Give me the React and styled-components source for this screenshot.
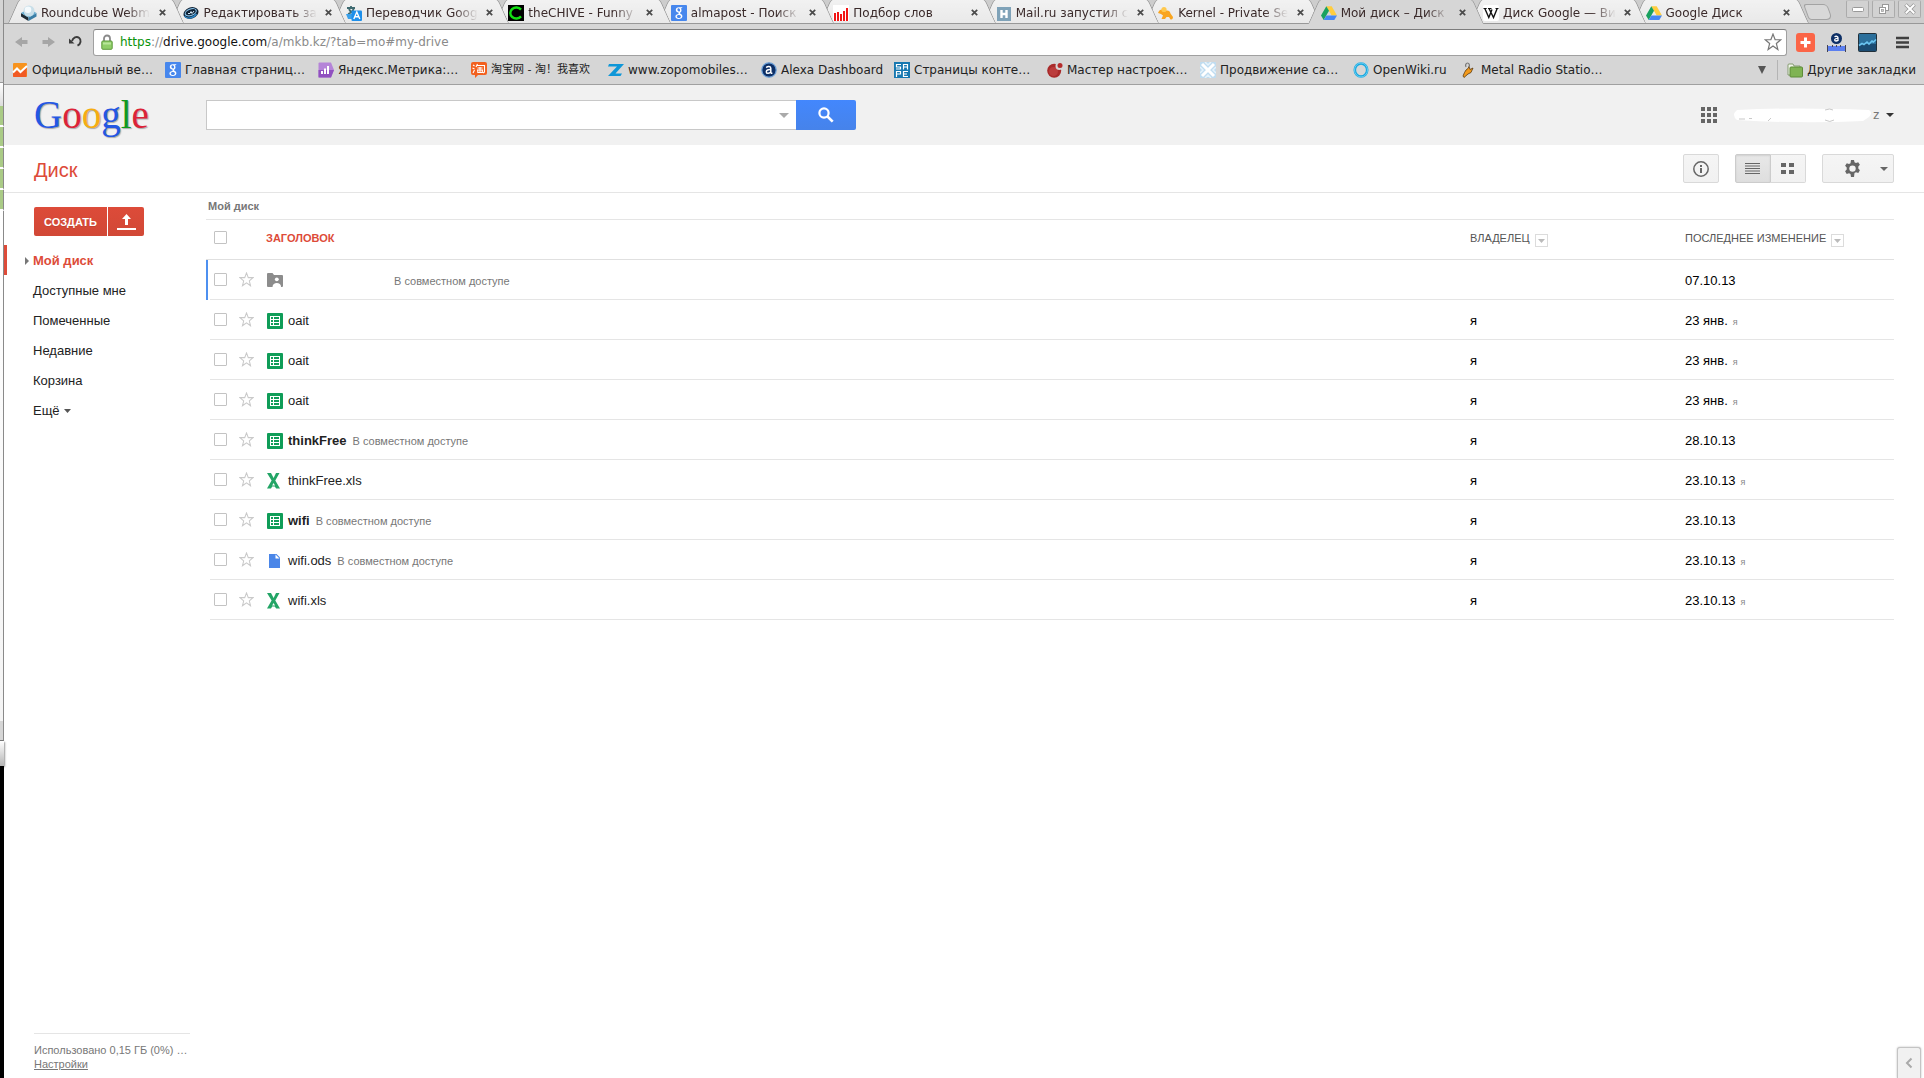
import React from "react";
import styled, { createGlobalStyle, css } from "styled-components";

const Global = createGlobalStyle`
  *, *::before, *::after { box-sizing: border-box; }
  body { margin: 0; background: #fff; font-family: "Liberation Sans", Arial, sans-serif; font-size: 13px; color: #222; }
  button, input { font: inherit; margin: 0; padding: 0; }
  button { border: 0; background: none; color: inherit; }
  a { color: inherit; text-decoration: none; }
  svg { display: block; flex: none; }
`;

const uiFont = css`
  font-family: "DejaVu Sans", "Noto Sans CJK SC", sans-serif;
  font-size: 12px;
`;

/* ---------- desktop and window ---------- */

const Desktop = styled.div`
  display: flex;
  min-height: 100vh;
`;

const Behind = styled.div`
  flex: 0 0 4px;
  display: flex;
  flex-direction: column;
  background: #000;
`;

const Slice = styled.div`
  flex: none;
  height: ${(p) => p.$h}px;
  background: ${(p) => p.$bg};
  border-right: ${(p) => (p.$edge === false ? "0" : "1px solid #8a8a8a")};
  border-bottom: ${(p) => p.$line || "0"};
  box-shadow: ${(p) => (p.$shadow ? "1px 1px 2px rgba(0,0,0,.4)" : "none")};
  z-index: ${(p) => (p.$shadow ? 1 : 0)};
`;

const BrowserWindow = styled.div`
  flex: 1;
  min-width: 0;
  display: flex;
  flex-direction: column;
`;

/* ---------- tab strip ---------- */

const TabStrip = styled.div`
  ${uiFont}
  display: flex;
  height: 24px;
  padding-left: 4px;
  background: #cdcdcd;
  border-bottom: 1px solid #989898;
`;

const Tabs = styled.div`
  flex: 1;
  display: grid;
  grid-template-columns: repeat(11, minmax(0, 1fr));
`;

const Tab = styled.div`
  position: relative;
  z-index: ${(p) => (p.$active ? 30 : 20 - p.$index)};
  height: 24px;
  padding: 1px 0 0 13px;
  display: flex;
  align-items: center;
  gap: 4px;
  color: #3a2a2a;

  &::before,
  &::after {
    content: "";
    position: absolute;
    z-index: -1;
    top: -1px;
    bottom: ${(p) => (p.$active ? 0 : 1)}px;
    width: 60%;
    background: ${(p) => (p.$active ? "#d6d6d6" : "linear-gradient(#f2f2f2, #e9e9e9)")};
  }
  &::before {
    left: 0;
    border-left: 1px solid #989898;
    border-top-left-radius: 5px;
    transform: skewX(-24deg);
    transform-origin: bottom left;
  }
  &::after {
    right: -14px;
    border-right: 1px solid #989898;
    border-top-right-radius: 5px;
    transform: skewX(24deg);
    transform-origin: bottom right;
  }
`;

const TabTitle = styled.a`
  flex: 1;
  white-space: nowrap;
  line-height: 18px;
  mask-image: linear-gradient(to right, #000 calc(100% - 24px), transparent);
`;

const TabClose = styled.button`
  flex: 0 0 16px;
  height: 16px;
  display: grid;
  place-items: center;
`;

const NewTab = styled.button`
  flex: none;
  width: 24px;
  height: 16px;
  margin: 4px 16px 0 11px;
  border: 1px solid #a3a3a3;
  border-radius: 3px 4px 6px 3px;
  background: #d8d8d8;
  transform: skewX(20deg);
`;

const WindowButtons = styled.div`
  display: flex;
  gap: 3px;
  padding: 0 3px 0 0;
`;

const WindowButton = styled.button`
  width: 23px;
  height: 18px;
  border: 1px solid #ababab;
  border-top-color: #c2c2c2;
  border-radius: 2px;
  background: #d2d2d2;
  display: grid;
  place-items: center;
`;

/* ---------- toolbar ---------- */

const Toolbar = styled.div`
  ${uiFont}
  display: flex;
  align-items: center;
  height: 34px;
  padding: 2px 15px 0 11px;
  background: #d6d6d6;
`;

const NavButton = styled.button`
  width: 27px;
  height: 24px;
  display: flex;
  align-items: center;
`;

const Omnibox = styled.div`
  flex: 1;
  height: 27px;
  margin: 0 9px 0 -3px;
  padding: 0 4px 0 7px;
  display: flex;
  align-items: center;
  gap: 7px;
  background: #fff;
  border: 1px solid #a0a0a0;
  border-top-color: #7d7d7d;
  border-radius: 3px;
`;

const Url = styled.span`
  flex: 1;
  line-height: 18px;
  color: #8a8a8a;
`;
const Scheme = styled.span`
  color: #0a930a;
`;
const Host = styled.span`
  color: #111;
`;

const Extensions = styled.div`
  display: flex;
  align-items: center;
  gap: 12px;
`;

const MenuButton = styled.button`
  margin-left: 19px;
`;

const BookmarkBar = styled.nav`
  ${uiFont}
  display: flex;
  align-items: center;
  height: 27px;
  padding: 0 8px 3px 8px;
  background: #d6d6d6;
  border-bottom: 1px solid #a0a0a0;
`;

const Bookmark = styled.a`
  flex: none;
  display: flex;
  align-items: center;
  gap: 4px;
  width: ${(p) => (p.$w ? p.$w + "px" : "auto")};
  font-size: ${(p) => (p.$small ? 11 : 12)}px;
  line-height: 18px;
  white-space: nowrap;
  color: #222;
`;

const Overflow = styled.button`
  margin: 0 9px 0 auto;
  padding-right: 11px;
  height: 20px;
  border-right: 1px solid #b4b4b4;
`;

/* ---------- Google bar ---------- */

const GoogleBar = styled.header`
  display: flex;
  align-items: center;
  height: 60px;
  padding: 0 30px;
  background: #f1f1f1;
`;

const Logo = styled.a`
  width: 172px;
  font: 39px/50px "Liberation Serif", serif;
  text-shadow: 1px 1px 1px rgba(0, 0, 0, 0.3);
`;
const Letter = styled.span`
  color: ${(p) => p.$c};
`;

const SearchForm = styled.form`
  display: flex;
  flex: 0 1 650px;
  height: 30px;
`;

const SearchBox = styled.div`
  flex: 1;
  display: flex;
  align-items: center;
  padding-right: 7px;
  background: #fff;
  border: 1px solid #c8c8c8;
  border-right: 0;
`;

const SearchInput = styled.input`
  flex: 1;
  height: 100%;
  border: 0;
  outline: 0;
  padding: 0 8px;
  background: transparent;
`;

const SearchButton = styled.button`
  width: 60px;
  border-radius: 0 2px 2px 0;
  background: linear-gradient(#4387fd, #4683ea);
  display: grid;
  place-items: center;
`;

const Account = styled.button`
  display: flex;
  align-items: center;
  margin-left: 16px;
`;

const AccountName = styled.span`
  display: flex;
  align-items: center;
  gap: 1px;
  width: 147px;
  margin-right: 6px;
  line-height: 18px;
  color: #777;
`;

const AppsButton = styled.button`
  margin-left: auto;
`;

/* ---------- Drive title row ---------- */

const TitleRow = styled.div`
  display: flex;
  align-items: center;
  height: 48px;
  padding: 0 30px;
  border-bottom: 1px solid #e5e5e5;
`;

const Title = styled.h1`
  margin: 0 auto 0 0;
  padding-top: 2px;
  font-size: 20px;
  line-height: 24px;
  font-weight: 400;
  color: #dd4b39;
`;

const ToolButton = styled.button`
  width: ${(p) => p.$w || 36}px;
  height: 29px;
  border: 1px solid #d9d9d9;
  border-radius: ${(p) => p.$radius || "2px"};
  border-left-width: ${(p) => (p.$joined ? 0 : 1)}px;
  background: linear-gradient(#f5f5f5, #f1f1f1);
  display: flex;
  align-items: center;
  justify-content: center;
  ${(p) =>
    p.$pressed &&
    css`
      border-color: #ccc;
      background: linear-gradient(#e8e8e8, #dedede);
      box-shadow: inset 0 1px 2px rgba(0, 0, 0, 0.1);
    `}
`;

const ToolGroup = styled.div`
  display: flex;
  margin: 0 16px;
`;

const GearWrap = styled.span`
  margin: 0 19px 0 16px;
`;

/* ---------- body ---------- */

const Body = styled.div`
  flex: 1;
  display: flex;
`;

const Sidebar = styled.aside`
  flex: 0 0 202px;
  display: flex;
  flex-direction: column;
  padding-top: 14px;
`;

const CreateRow = styled.div`
  display: flex;
  gap: 1px;
  padding: 0 30px;
  margin-bottom: 9px;
`;

const RedButton = styled.button`
  width: ${(p) => p.$w}px;
  height: 29px;
  border-radius: ${(p) => p.$radius};
  background: linear-gradient(#dd4b39, #d14836);
  color: #fff;
  font-size: 11px;
  font-weight: 700;
  text-shadow: 0 1px rgba(0, 0, 0, 0.1);
  display: grid;
  place-items: center;
`;

const NavList = styled.ul`
  list-style: none;
  margin: 0;
  padding: 0;
`;

const NavItem = styled.li`
  height: 30px;
  display: flex;
  align-items: center;
  border-left: 3px solid ${(p) => (p.$active ? "#dd4b39" : "transparent")};
  padding: 2px 0 0 18px;
`;

const NavArrow = styled.span`
  width: 8px;
`;

const NavLink = styled.a`
  display: flex;
  align-items: center;
  gap: 4px;
  line-height: 16px;
  font-weight: ${(p) => (p.$active ? 700 : 400)};
  color: ${(p) => (p.$active ? "#dd4b39" : "#222")};
`;

const Storage = styled.footer`
  margin: auto 16px 7px 30px;
  padding-top: 9px;
  border-top: 1px solid #e5e5e5;
  font-size: 11px;
  line-height: 14px;
  color: #777;
  white-space: nowrap;
`;

const SettingsLink = styled.a`
  text-decoration: underline;
`;

const Content = styled.main`
  flex: 1;
  min-width: 0;
  padding-right: 30px;
`;

const Crumb = styled.h2`
  margin: 0;
  padding: 6px 2px 6px;
  font-size: 11px;
  line-height: 14px;
  color: #777;
  border-bottom: 1px solid #e5e5e5;
`;

const FileTable = styled.table`
  width: 100%;
  table-layout: fixed;
  border-collapse: separate;
  border-spacing: 0;
`;

const HeadCell = styled.th`
  width: ${(p) => (p.$w ? p.$w + "px" : "auto")};
  height: 40px;
  padding: 0 0 4px;
  border-bottom: 1px solid #e0e0e0;
  text-align: left;
  font-size: 11px;
  font-weight: ${(p) => (p.$sorted ? 700 : 400)};
  color: ${(p) => (p.$sorted ? "#dd4b39" : "#555")};
`;

const HeadLabel = styled.span`
  display: flex;
  align-items: center;
  gap: 5px;
`;

const SortButton = styled.button`
  width: 13px;
  height: 13px;
  margin-top: 6px;
  border: 1px solid #dcdcdc;
  display: grid;
  place-items: center;
`;

const Cell = styled.td`
  height: 40px;
  padding: ${(p) => (p.$text ? "2px 0 0" : "0")};
  border-bottom: 1px solid #e5e5e5;
  color: ${(p) => (p.$dark ? "#000" : "#222")};
  white-space: nowrap;
`;

const MarkCell = styled.td`
  padding: 0;
  box-shadow: ${(p) => (p.$on ? "inset 2px 0 #4d90f0" : "none")};
`;

const Check = styled.input`
  appearance: none;
  display: block;
  width: 13px;
  height: 13px;
  margin-left: 4px;
  border: 1px solid #c3c3c3;
  border-radius: 1px;
  background: #fff;
`;

const StarButton = styled.button`
  display: block;
  padding-left: 1px;
`;

const NameLine = styled.div`
  display: flex;
  align-items: center;
  padding-left: 1px;
  line-height: 16px;
`;

const IconBox = styled.span`
  width: 21px;
`;

const FileName = styled.a`
  min-width: ${(p) => (p.$blank ? 100 : 0)}px;
  font-weight: ${(p) => (p.$bold ? 700 : 400)};
`;

const Shared = styled.span`
  margin-left: 6px;
  font-size: 11px;
  color: #777;
`;

const By = styled.span`
  margin-left: 5px;
  font-size: 9px;
  color: #888;
`;

const Expander = styled.button`
  position: fixed;
  right: 3px;
  bottom: 0;
  width: 24px;
  height: 31px;
  border: 1px solid #c4c4c4;
  border-bottom: 0;
  border-radius: 3px 3px 0 0;
  background: #f1f1f1;
  box-shadow: 0 0 2px rgba(0, 0, 0, 0.3);
  display: grid;
  place-items: center;
`;

/* ---------- drawings ---------- */

const Svg = ({ w = 16, h = w, vb, children }) => (
  <svg width={w} height={h} viewBox={vb || `0 0 ${w} ${h}`} aria-hidden="true">
    {children}
  </svg>
);

const Down = ({ w = 8, h = 4, c = "#555" }) => (
  <Svg w={w} h={h}>
    <path d={`M0 0H${w}L${w / 2} ${h}Z`} fill={c} />
  </Svg>
);

const DriveIcon = () => (
  <Svg>
    <path d="M5.3 1.2h5.4L16 10.4h-5.3Z" fill="#ffcd3e" />
    <path d="M5.3 1.2 8 5.8 2.7 15 0 10.4Z" fill="#19a15f" />
    <path d="M5.4 10.4H16L13.3 15H2.7Z" fill="#4587f4" />
  </Svg>
);

const GIcon = () => (
  <Svg>
    <rect width="16" height="16" rx="1" fill="#4787ed" />
    <path d="M11.5 2.2H8C5.700 2.200 4.800 3.600 4.800 4.900c0 1.500 1.200 2.600 2.800 2.500-.4.900 0 1.300.4 1.700-2.200.1-3.600.9-3.600 2.500 0 1.400 1.300 2.300 3.300 2.300 2.400 0 3.700-1.200 3.700-2.700 0-2.200-2.900-2.300-2.300-3.400.9-.6 1.400-1.500 1.400-2.500 0-.9-.4-1.500-.9-2h1.200Z M7.600 3.200c1 0 1.500 1.100 1.500 2s-.4 1.400-1.200 1.400c-1 0-1.500-1.100-1.500-2 0-.8.400-1.400 1.200-1.400Z M8.200 9.900c1.200.2 1.700.8 1.700 1.500 0 .9-.7 1.500-2 1.500s-2.100-.6-2.100-1.500c0-1 .9-1.500 2.400-1.500Z" fill="#fff" fillRule="evenodd" />
  </Svg>
);

const AlexaIcon = ({ w = 16 }) => (
  <Svg w={w} vb="0 0 16 16">
    <circle cx="8" cy="8" r="7.200" fill="#0d2f66" stroke="#6b9fd8" strokeWidth="1.200" />
    <path d="M5.200 5.600c1.500-1.500 4.600-1.400 4.600.6v5M9.800 7.600C7 7.400 5.300 8.200 5.300 9.900c0 1.900 3.300 2 4.500 0M9.800 11.200h1.600" fill="none" stroke="#fff" strokeWidth="1.500" />
  </Svg>
);

const favicons = {
  roundcube: (
    <Svg>
      <path d="M0 8 7.500 12.500V16L0 11.500Z" fill="#1d2a33" />
      <path d="M15.500 8 7.500 12.500V16l8-4.500Z" fill="#3b7ea6" />
      <path d="M0 8 8 4l7.500 4-8 4.500Z" fill="#5fa8cf" />
      <circle cx="8" cy="6" r="5.500" fill="#c9dfe9" />
      <circle cx="7" cy="4.800" r="3.300" fill="#f4fafd" />
    </Svg>
  ),
  edit: (
    <Svg>
      <ellipse cx="8" cy="8" rx="7.700" ry="5.600" transform="rotate(-20 8 8)" fill="#0f2236" />
      <ellipse cx="8" cy="7.200" rx="5.800" ry="3.200" transform="rotate(-20 8 8)" fill="none" stroke="#8bc4ea" strokeWidth="1.100" />
      <path d="M5 8.500h2l1-2 1 2 2-2.500" stroke="#cfe6f5" fill="none" />
      <path d="M1.500 11c2 3 8 3 12-2" fill="none" stroke="#2a86c8" strokeWidth="1.300" />
    </Svg>
  ),
  translate: (
    <Svg>
      <path d="M1 3h8M5 1v2M8 3c-1 3-3 5-6 6M3 4c1 2 3 4 5 4" stroke="#3f6a70" strokeWidth="1.800" fill="none" />
      <path d="M0 9h6v5H2Z" fill="#3aa0ea" />
      <rect x="5.500" y="5.500" width="10.500" height="10.500" rx="1" fill="#1e8fea" />
      <path d="m7.800 14 3-7 3 7M9 11.800h3.600" stroke="#fff" strokeWidth="1.400" fill="none" />
    </Svg>
  ),
  chive: (
    <Svg>
      <rect width="16" height="16" fill="#000" />
      <path d="M13 4.600A6 5.500 0 1 0 13 11.400" fill="none" stroke="#12e012" strokeWidth="2.400" />
    </Svg>
  ),
  google: <GIcon />,
  podbor: (
    <Svg>
      <rect width="16" height="16" fill="#fff" />
      <path d="M2 8v8M5 7v9M8 9v7M11 6v10M14 3v13" stroke="#f21616" strokeWidth="2" />
    </Svg>
  ),
  mail: (
    <Svg>
      <rect x="1" y="2" width="14" height="14" fill="#7fa2b8" />
      <path d="M5.500 5v8M10.500 5v8M5 9h6" stroke="#fff" strokeWidth="2.400" />
    </Svg>
  ),
  kernel: (
    <Svg>
      <path d="M0 8c1-3 3-4 5-3.500L7 6c3-1 5 0 5.500 2.500L15 12c0 2-1 2.500-2.500 2.500L11 12H8.500L7 14H3.500L5 10.500 3 9Z" fill="#f9a51f" />
      <circle cx="6" cy="4.500" r="2.600" fill="#ffc94d" />
    </Svg>
  ),
  drive: <DriveIcon />,
  wiki: (
    <Svg>
      <rect width="16" height="16" rx="2" fill="#fff" />
      <path d="m1.800 3.500 4 9L9 4.500M6 3.500l4.500 9 3.700-9" fill="none" stroke="#111" strokeWidth="1.400" />
      <path d="M.5 3.500h3.200M5 3.500h3.500M12.500 3.500h3" stroke="#111" />
    </Svg>
  ),
  analytics: (
    <Svg>
      <rect x="1" y="1" width="14" height="14" rx="1" fill="#f7931e" />
      <path d="M1 11.500 5 8l3 3 6.500-6.500V14q0 1-1 1H2q-1 0-1-1Z" fill="#f15a24" />
      <path d="m1 10.500 4-4L8.500 10 15 4" fill="none" stroke="#fff" strokeWidth="2" />
    </Svg>
  ),
  metrika: (
    <Svg>
      <path d="M1.500.5H13L16 8l-3 7.500H1.500Q.5 15.500.5 14.500v-13Q.5.500 1.500.500Z" fill="#b584d8" />
      <path d="M.5 8H16l-3 7.500H.5Z" fill="#9050c0" />
      <path d="M4 9v3M7 6.500V12M10 4v8" stroke="#fff" strokeWidth="2" />
    </Svg>
  ),
  taobao: (
    <Svg>
      <path d="M2 0h12q2 0 2 2v9q0 2-2 2H7l-3 3v-3H2q-2 0-2-2V2q0-2 2-2Z" fill="#f2601e" />
      <path d="m2 3 1.500 1M1.500 6l2 1M3.500 8 2 11M6.500 2 5 5M6 3.500h7.500V10L12 11M6.500 6h5M6 8h6M9 5v5M6.800 8.500v2h4.500v-2" fill="none" stroke="#fff" strokeWidth="1.100" />
    </Svg>
  ),
  zopo: (
    <Svg>
      <path d="M1 2h15l-8.500 9.500H14L12.500 14H0l9-9.500H0Z" fill="#0f97d8" />
    </Svg>
  ),
  alexa: <AlexaIcon />,
  sape: (
    <Svg>
      <rect width="16" height="16" fill="#1778b0" />
      <path d="M7 2.500H2.500V5H6.500V7H2M9.500 7.500v-5h4v5M9.500 5h4M2.500 15V9.500h4V12h-4M14 9.500H9.500v5H14M9.500 12H13" fill="none" stroke="#fff" strokeWidth="1.200" />
    </Svg>
  ),
  master: (
    <Svg>
      <circle cx="7.200" cy="8.700" r="7" fill="#a92a2a" />
      <circle cx="6.500" cy="9.500" r="4.500" fill="#bb3c3c" />
      <circle cx="12.500" cy="4" r="4" fill="#d6d6d6" />
      <circle cx="13" cy="3.500" r="2.500" fill="#b52c2c" />
    </Svg>
  ),
  promo: (
    <Svg>
      <rect width="16" height="16" rx="1" fill="#bfdcf0" />
      <path d="M2 2l12 12M14 2 2 14" stroke="#fff" strokeWidth="3" fill="none" />
      <path d="M5 0l3 3 3-3M5 16l3-3 3 3M0 5l3 3-3 3M16 5l-3 3 3 3" stroke="#e6f2fa" strokeWidth="1.500" fill="none" />
    </Svg>
  ),
  openwiki: (
    <Svg>
      <ellipse cx="8" cy="8" rx="6.200" ry="6.500" fill="none" stroke="#18a8e0" strokeWidth="2.600" />
      <ellipse cx="8" cy="8" rx="6.500" ry="7" fill="none" stroke="#7fd6f4" strokeWidth=".8" />
    </Svg>
  ),
  radio: (
    <Svg>
      <path d="M2 14 3.500 10.500 5 8l2-1.500 1-2 1 3L12 6l-2 4.500-3 1.500-4 3.500Z" fill="#f39a1b" stroke="#5b3a10" strokeWidth=".8" />
      <path d="M5 5c-1-2 0-4 1.500-4S9 3 8 5" fill="none" stroke="#777" strokeWidth="1.200" />
    </Svg>
  ),
};

const StarIcon = ({ w = 15, c = "#c9c9c9" }) => (
  <Svg w={w} vb="0 0 16 16">
    <path d="m8 1 1.900 5h5l-3.900 3.400 1.300 5.200L8 11.600l-4.300 3 1.300-5.200L1.100 6h5Z" fill="#fff" stroke={c} strokeWidth="1.100" />
  </Svg>
);

const fileIcons = {
  folder: (
    <Svg>
      <path d="M0 2q0-1 1-1h4.500L7 3h8q1 0 1 1v10q0 1-1 1H1q-1 0-1-1Z" fill="#8c8c8c" transform="translate(0 -1)" />
      <circle cx="9.800" cy="6.300" r="1.900" fill="#fff" />
      <path d="M5.500 14c0-2.500 2-4 4.300-4s4.300 1.500 4.300 4Z" fill="#fff" />
    </Svg>
  ),
  sheet: (
    <Svg>
      <rect width="16" height="16" rx="1" fill="#0f9d58" />
      <rect x="3.500" y="3.500" width="9" height="9" fill="none" stroke="#fff" />
      <path d="M3 6.500h10M3 9.500h10M6.500 3v10" stroke="#fff" />
    </Svg>
  ),
  excel: (
    <Svg>
      <path d="M0 0h4l2.600 5L9 0h3.500L8.300 7.500 13 15.500H9.200l-1.500-2H5.200L4 15.500H0L4.600 7.500Z" fill="#23a566" />
      <path d="m6.500 10 1.600 2.500H5.200Z" fill="#fff" />
    </Svg>
  ),
  file: (
    <Svg>
      <path d="M2 1h7.500l3.500 3.500V15H2Z" fill="#4a86e8" />
      <path d="M8.500 1.500v4h4Z" fill="#fff" />
    </Svg>
  ),
};

const CloseX = () => (
  <Svg w={7}>
    <path d="m.8.8 5.400 5.400M6.200.8.8 6.200" stroke="#4a4a4a" strokeWidth="1.700" />
  </Svg>
);

/* ---------- data ---------- */

const tabs = [
  ["roundcube", "Roundcube Webm"],
  ["edit", "Редактировать за"],
  ["translate", "Переводчик Goog"],
  ["chive", "theCHIVE - Funny"],
  ["google", "almapost - Поиск"],
  ["podbor", "Подбор слов"],
  ["mail", "Mail.ru запустил с"],
  ["kernel", "Kernel - Private Se"],
  ["drive", "Мой диск – Диск"],
  ["wiki", "Диск Google — Ви"],
  ["drive", "Google Диск"],
];

const bookmarks = [
  ["analytics", "Официальный ве…", 153],
  ["google", "Главная страниц…", 153],
  ["metrika", "Яндекс.Метрика:…", 153],
  ["taobao", "淘宝网 - 淘！我喜欢", 137],
  ["zopo", "www.zopomobiles…", 153],
  ["alexa", "Alexa Dashboard", 133],
  ["sape", "Страницы конте…", 153],
  ["master", "Мастер настроек…", 153],
  ["promo", "Продвижение са…", 153],
  ["openwiki", "OpenWiki.ru", 108],
  ["radio", "Metal Radio Statio…", 153],
];

const nav = ["Мой диск", "Доступные мне", "Помеченные", "Недавние", "Корзина", "Ещё"];

const files = [
  { icon: "folder", name: "", shared: true, owner: "", date: "07.10.13", marked: true },
  { icon: "sheet", name: "oait", owner: "я", date: "23 янв.", by: true },
  { icon: "sheet", name: "oait", owner: "я", date: "23 янв.", by: true },
  { icon: "sheet", name: "oait", owner: "я", date: "23 янв.", by: true },
  { icon: "sheet", name: "thinkFree", bold: true, shared: true, owner: "я", date: "28.10.13" },
  { icon: "excel", name: "thinkFree.xls", owner: "я", date: "23.10.13", by: true },
  { icon: "sheet", name: "wifi", bold: true, shared: true, owner: "я", date: "23.10.13" },
  { icon: "file", name: "wifi.ods", shared: true, owner: "я", date: "23.10.13", by: true },
  { icon: "excel", name: "wifi.xls", owner: "я", date: "23.10.13", by: true },
];

const logo = [
  ["G", "#2457e3"],
  ["o", "#dc2338"],
  ["o", "#f6ad12"],
  ["g", "#2457e3"],
  ["l", "#13991d"],
  ["e", "#dc2338"],
];

/* ---------- sections ---------- */

const BackgroundWindows = () => (
  <Behind>
    <Slice $h={83} $bg="#d4d4d4" $line="1px solid #999" />
    <Slice $h={23} $bg="linear-gradient(#fff, #dcdcdc)" />
    {[0, 1, 2, 3, 4].map((n) => (
      <Slice key={n} $h={21} $bg="#aacb86" $line="2px solid #fff" />
    ))}
    <Slice $h={510} $bg="linear-gradient(#fff, #f4f4f4)" />
    <Slice $h={20} $bg="#d6d6d6" $line="1px solid #777" />
    <Slice $h={25} $bg="linear-gradient(#fff, #b5b5b5)" $edge={false} $shadow />
  </Behind>
);

const BrowserChrome = () => (
  <>
    <TabStrip>
      <Tabs>
        {tabs.map(([icon, title], i) => (
          <Tab key={i} $index={i} $active={i === 8}>
            {favicons[icon]}
            <TabTitle href="#tab">{title}</TabTitle>
            <TabClose aria-label="Закрыть вкладку">
              <CloseX />
            </TabClose>
          </Tab>
        ))}
      </Tabs>
      <NewTab aria-label="Новая вкладка" />
      <WindowButtons>
        <WindowButton aria-label="Свернуть">
          <Svg w={12} h={5}>
            <rect x=".5" y=".5" width="11" height="4" rx="1" fill="#fff" stroke="#999" />
          </Svg>
        </WindowButton>
        <WindowButton aria-label="Развернуть">
          <Svg w={12}>
            <rect x="4.500" y="1.500" width="6" height="6" fill="#fff" stroke="#999" />
            <rect x="1.500" y="4.500" width="6" height="6" fill="#fff" stroke="#999" />
            <rect x="3.500" y="6.500" width="2" height="2" fill="#ccc" stroke="#999" strokeWidth=".7" />
          </Svg>
        </WindowButton>
        <WindowButton aria-label="Закрыть">
          <Svg w={12}>
            <path d="m1.500 1.500 9 9M10.500 1.500l-9 9" stroke="#999" strokeWidth="3.600" />
            <path d="m1.800 1.800 8.400 8.400M10.200 1.800l-8.400 8.400" stroke="#fff" strokeWidth="2" />
          </Svg>
        </WindowButton>
      </WindowButtons>
    </TabStrip>

    <Toolbar>
      <NavButton aria-label="Назад">
        <Svg w={13} h={12}>
          <path d="M0 6 7 1v3h5.500v4H7v3Z" fill="#a6a6a6" />
        </Svg>
      </NavButton>
      <NavButton aria-label="Вперёд">
        <Svg w={13} h={12}>
          <path d="M13 6 6 1v3H.5v4H6v3Z" fill="#a6a6a6" />
        </Svg>
      </NavButton>
      <NavButton aria-label="Обновить">
        <Svg w={14}>
          <path d="M3 6C4 2.500 7.500 1 10 2.700c2.600 2 2 6.300-1.500 8" fill="none" stroke="#3c3c3c" strokeWidth="1.900" />
          <path d="M0 3.500v5h5.500Z" fill="#3c3c3c" />
        </Svg>
      </NavButton>
      <Omnibox>
        <Svg w={12} h={16}>
          <path d="M3 8V4.500a3 3 0 0 1 6 0V8" fill="none" stroke="#8a8a8a" strokeWidth="1.800" />
          <rect x=".8" y="7" width="10.400" height="8.300" rx="1" fill="#8fce68" stroke="#5e9a3c" />
          <path d="M2 9.500h8" stroke="#b8e69a" strokeWidth="2" />
        </Svg>
        <Url>
          <Scheme>https</Scheme>://<Host>drive.google.com</Host>/a/mkb.kz/?tab=mo#my-drive
        </Url>
        <StarIcon w={18} c="#777" />
      </Omnibox>
      <Extensions>
        <Svg w={19}>
          <rect width="19" height="19" rx="3" fill="#fb6547" />
          <path d="M9.500 4.500v10M4.500 9.500h10" stroke="#fff" strokeWidth="3" />
        </Svg>
        <Svg w={19}>
          <circle cx="9.500" cy="5.500" r="5.500" fill="#0d2f66" />
          <path d="M7.500 3.800c1.500-1 3.500-.6 3.500 1V8M11 5.500C9 5.300 7.700 5.900 7.700 7c0 1.300 2.300 1.300 3.300 0" fill="none" stroke="#fff" strokeWidth="1.300" />
          <rect x="0" y="13" width="19" height="5" fill="#5b7ff0" />
          <path d="M.5 12v7M5.500 12v2M9.500 12v2M13.500 12v2M18.500 12v7" stroke="#445" strokeWidth="1" />
        </Svg>
        <Svg w={19}>
          <rect x=".5" y=".5" width="18" height="18" rx="1" fill="#2b6f9b" stroke="#22303a" />
          <rect x="1" y="11" width="17" height="7" fill="#1b4c73" />
          <path d="m1 12.500 3-2 2 1 3-2.500 2 2 3-3 1.500 1L18 6.500" fill="none" stroke="#6cc6f2" strokeWidth="1.600" />
        </Svg>
      </Extensions>
      <MenuButton aria-label="Меню">
        <Svg w={13}>
          <path d="M0 2h13M0 6.500h13M0 11h13" stroke="#3f3f3f" strokeWidth="2.600" />
        </Svg>
      </MenuButton>
    </Toolbar>

    <BookmarkBar>
      {bookmarks.map(([icon, label, w]) => (
        <Bookmark key={label} href="#bookmark" $w={w} $small={icon === "taobao"}>
          {favicons[icon]}
          {label}
        </Bookmark>
      ))}
      <Overflow aria-label="Другие">
        <Down w={8} h={8} />
      </Overflow>
      <Bookmark href="#other">
        <Svg>
          <path d="M1 3q0-1 1-1h4l1 2h6v9H1Z" fill="#f0f5ea" stroke="#6f8a55" strokeWidth=".8" />
          <rect x="3" y="5" width="12.500" height="10" rx="1" fill="#7fb353" stroke="#5d8b38" />
        </Svg>
        Другие закладки
      </Bookmark>
    </BookmarkBar>
  </>
);

const FileRow = ({ file }) => (
  <tr>
    <MarkCell $on={file.marked} />
    <Cell>
      <Check type="checkbox" aria-label={`Выбрать ${file.name}`} />
    </Cell>
    <Cell>
      <StarButton aria-label="Пометить">
        <StarIcon />
      </StarButton>
    </Cell>
    <Cell $text>
      <NameLine>
        <IconBox>{fileIcons[file.icon]}</IconBox>
        <FileName href="#file" $bold={file.bold} $blank={!file.name}>
          {file.name}
        </FileName>
        {file.shared && <Shared>В совместном доступе</Shared>}
      </NameLine>
    </Cell>
    <Cell $text $dark>
      {file.owner}
    </Cell>
    <Cell $text $dark>
      {file.date}
      {file.by && <By>я</By>}
    </Cell>
  </tr>
);

export default function App() {
  return (
    <>
      <Global />
      <Desktop>
        <BackgroundWindows />
        <BrowserWindow>
          <BrowserChrome />

          <GoogleBar>
            <Logo href="#home" aria-label="Google">
              {logo.map(([ch, c], i) => (
                <Letter key={i} $c={c}>
                  {ch}
                </Letter>
              ))}
            </Logo>
            <SearchForm>
              <SearchBox>
                <SearchInput type="text" aria-label="Поиск" />
                <button type="button" aria-label="Параметры поиска">
                  <Down w={10} h={5} c="#aaa" />
                </button>
              </SearchBox>
              <SearchButton type="button" aria-label="Найти">
                <Svg w={16}>
                  <circle cx="6" cy="6" r="4.600" fill="none" stroke="#fff" strokeWidth="2.200" />
                  <path d="m9.500 9.500 5.200 5.200" stroke="#fff" strokeWidth="2.600" />
                </Svg>
              </SearchButton>
            </SearchForm>
            <AppsButton aria-label="Приложения">
              <Svg w={16}>
                {[0, 6, 12].map((y) =>
                  [0, 6, 12].map((x) => <rect key={x + "-" + y} x={x} y={y} width="4" height="4" fill="#666" />)
                )}
              </Svg>
            </AppsButton>
            <Account aria-label="Аккаунт">
              <AccountName>
                <Svg w={139} h={18}>
                  <path d="M4 4Q60 1 136 4Q140 7 136 11L130 15Q70 18 4 14Q-2 9 4 4Z" fill="#fff" />
                  <path d="M6 13h6M16 12.500h3M35 15l3-3M92 14q5 3 9 0M92 4q5-2 8 0" fill="none" stroke="#c9c9c9" />
                </Svg>
                z
              </AccountName>
              <Down w={8} h={4} c="#333" />
            </Account>
          </GoogleBar>

          <TitleRow>
            <Title>Диск</Title>
            <ToolButton aria-label="Сведения">
              <Svg w={16}>
                <circle cx="8" cy="8" r="7.200" fill="none" stroke="#666" strokeWidth="1.500" />
                <path d="M8 4v2M8 7v5" stroke="#666" strokeWidth="2" />
              </Svg>
            </ToolButton>
            <ToolGroup>
              <ToolButton $pressed $radius="2px 0 0 2px" aria-label="Список">
                <Svg w={16} h={11}>
                  <path d="M0 .5h15M0 3h15M0 5.500h15M0 8h15M0 10.500h15" stroke="#666" />
                </Svg>
              </ToolButton>
              <ToolButton $w={35} $joined $radius="0 2px 2px 0" aria-label="Сетка">
                <Svg w={14} h={11}>
                  <path d="M0 0h5v4H0ZM8 0h5v4H8ZM0 7h5v4H0ZM8 7h5v4H8Z" fill="#666" />
                </Svg>
              </ToolButton>
            </ToolGroup>
            <ToolButton $w={72} aria-label="Настройки">
              <GearWrap>
                <Svg w={17}>
                  <path
                    d="M7 0h3l.5 2.300 1.500.8 2.200-.9 1.700 2.600-1.600 1.600v2.200l1.600 1.700-1.600 2.700-2.300-.8-1.500.9L10 17H7l-.5-2.900-1.500-.9-2.300.8-1.600-2.700 1.600-1.700V7.400L1.100 5.800 2.800 3.200l2.200.9 1.500-.8Z"
                    fill="#666"
                  />
                  <circle cx="8.500" cy="8.600" r="3.200" fill="#f3f3f3" />
                </Svg>
              </GearWrap>
              <Down w={8} h={4} c="#666" />
            </ToolButton>
          </TitleRow>

          <Body>
            <Sidebar>
              <CreateRow>
                <RedButton $w={73} $radius="2px 0 0 2px">
                  СОЗДАТЬ
                </RedButton>
                <RedButton $w={36} $radius="0 2px 2px 0" aria-label="Загрузить">
                  <Svg w={19} h={16}>
                    <path d="M9.500 0 14 5h-3v6H8V5H5ZM0 14h19v2H0Z" fill="#fff" />
                  </Svg>
                </RedButton>
              </CreateRow>
              <NavList>
                {nav.map((label, i) => (
                  <NavItem key={label} $active={i === 0}>
                    <NavArrow>
                      {i === 0 && (
                        <Svg w={4} h={8}>
                          <path d="M0 0v8l4-4Z" fill="#777" />
                        </Svg>
                      )}
                    </NavArrow>
                    <NavLink href="#nav" $active={i === 0}>
                      {label}
                      {i === 5 && <Down w={7} h={4} />}
                    </NavLink>
                  </NavItem>
                ))}
              </NavList>
              <Storage>
                <div>Использовано 0,15 ГБ (0%) …</div>
                <SettingsLink href="#settings">Настройки</SettingsLink>
              </Storage>
            </Sidebar>

            <Content>
              <Crumb>Мой диск</Crumb>
              <FileTable>
                <thead>
                  <tr>
                    <HeadCell $w={4} />
                    <HeadCell $w={28}>
                      <Check type="checkbox" aria-label="Выбрать все" />
                    </HeadCell>
                    <HeadCell $w={28} />
                    <HeadCell $sorted>ЗАГОЛОВОК</HeadCell>
                    <HeadCell $w={215}>
                      <HeadLabel>
                        ВЛАДЕЛЕЦ
                        <SortButton aria-label="Сортировать">
                          <Down w={7} h={4} c="#bbb" />
                        </SortButton>
                      </HeadLabel>
                    </HeadCell>
                    <HeadCell $w={209}>
                      <HeadLabel>
                        ПОСЛЕДНЕЕ ИЗМЕНЕНИЕ
                        <SortButton aria-label="Сортировать">
                          <Down w={7} h={4} c="#bbb" />
                        </SortButton>
                      </HeadLabel>
                    </HeadCell>
                  </tr>
                </thead>
                <tbody>
                  {files.map((file, i) => (
                    <FileRow key={i} file={file} />
                  ))}
                </tbody>
              </FileTable>
            </Content>
          </Body>
        </BrowserWindow>
      </Desktop>
      <Expander aria-label="Показать панель">
        <Svg w={8} h={12}>
          <path d="M6.500 1.500 2 6l4.500 4.500" fill="none" stroke="#aaa" strokeWidth="2" />
        </Svg>
      </Expander>
    </>
  );
}
